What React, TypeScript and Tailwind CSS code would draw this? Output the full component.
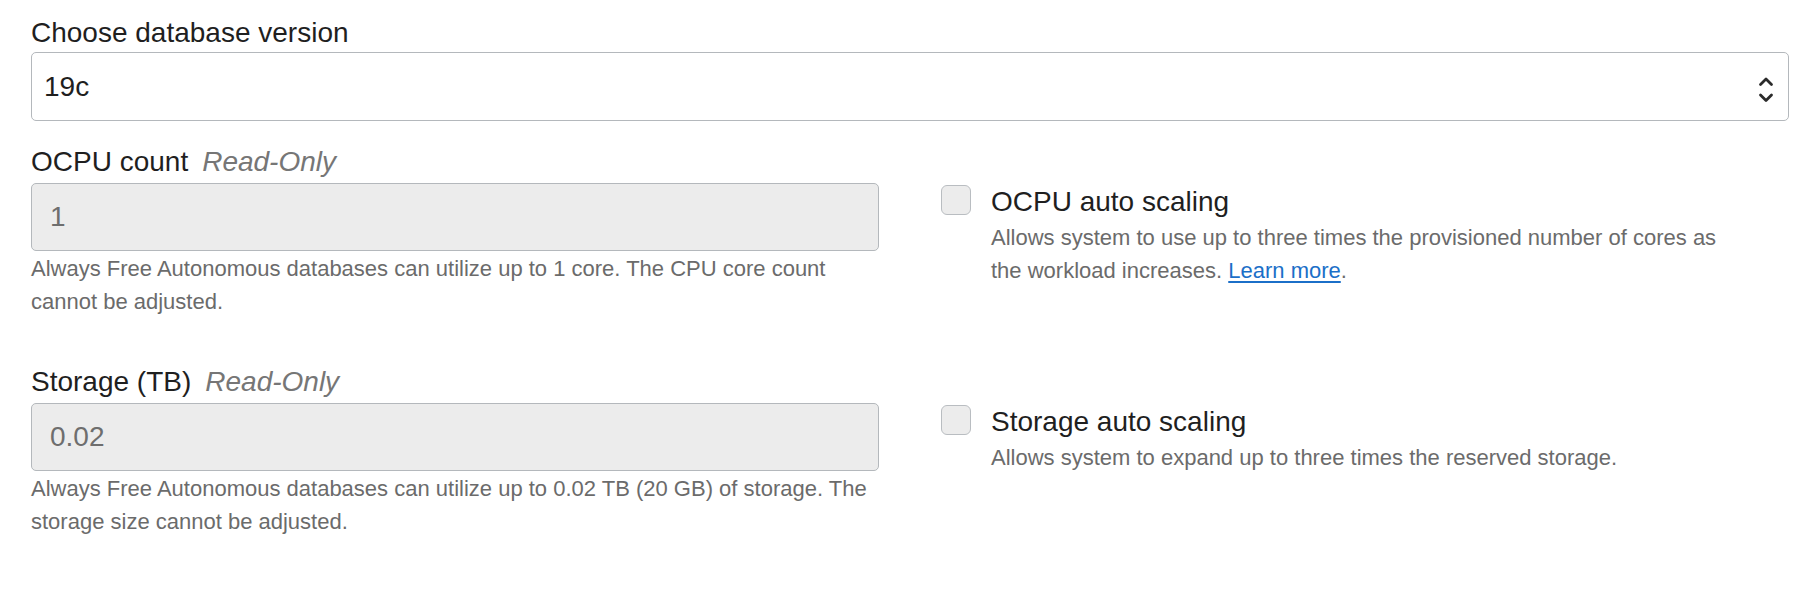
import type { ReactNode } from 'react'

interface ReadOnlyFieldProps {
  label: string
  value: string
  help: string
}

function ReadOnlyField({ label, value, help }: ReadOnlyFieldProps) {
  return (
    <div>
      <div className="text-[28px] leading-[36px] text-[#1f1f1f]">
        {label}
        <span className="ml-[14px] italic text-[#767676]">Read-Only</span>
      </div>
      <div className="mt-[3px] flex h-[68px] items-center rounded-[5px] border border-[#b4b8bc] bg-[#ececec] pl-[18px] text-[28px] text-[#6e6e6e]">
        {value}
      </div>
      <p className="mt-[1px] text-[22px] leading-[33px] text-[#6b6b6b]">{help}</p>
    </div>
  )
}

interface AutoScaleOptionProps {
  title: string
  children: ReactNode
}

function AutoScaleOption({ title, children }: AutoScaleOptionProps) {
  return (
    <label className="flex items-start gap-[20px] pt-[39px] cursor-pointer">
      <span className="mt-[2px] h-[30px] w-[30px] shrink-0 rounded-[6px] border border-[#b9bdc1] bg-[#ececec]" />
      <span className="block">
        <span className="block pt-[1px] text-[28px] leading-[36px] text-[#1f1f1f]">{title}</span>
        <span className="mt-[1px] block max-w-[760px] text-[22px] leading-[33px] text-[#6b6b6b]">
          {children}
        </span>
      </span>
    </label>
  )
}

export default function App() {
  return (
    <div className="min-h-screen bg-white px-[31px] pt-[15px] font-['Liberation_Sans',Arial,sans-serif]">
      <label className="block text-[28px] leading-[36px] text-[#1f1f1f]">Choose database version</label>
      <div className="mt-[1px] flex h-[69px] items-center justify-between rounded-[5px] border border-[#b4b8bc] bg-white pl-[12px] pr-[14px] text-[28px] text-[#1f1f1f]">
        <span>19c</span>
        <svg
          width="16"
          height="28"
          viewBox="0 0 16 28"
          fill="none"
          stroke="#2b2b2b"
          strokeWidth="2.8"
          strokeLinecap="round"
          strokeLinejoin="round"
          className="mt-[6px]"
        >
          <path d="M2.5 8.5 L8 3 L13.5 8.5" />
          <path d="M2.5 19 L8 24.5 L13.5 19" />
        </svg>
      </div>

      <div className="mt-[23px] grid grid-cols-2 gap-x-[62px]">
        <ReadOnlyField
          label="OCPU count"
          value="1"
          help="Always Free Autonomous databases can utilize up to 1 core. The CPU core count cannot be adjusted."
        />
        <AutoScaleOption title="OCPU auto scaling">
          Allows system to use up to three times the provisioned number of cores as the workload increases.{' '}
          <a href="#" className="text-[#1b6fc8] underline underline-offset-[3px]">Learn more</a>.
        </AutoScaleOption>
      </div>

      <div className="mt-[46px] grid grid-cols-2 gap-x-[62px]">
        <ReadOnlyField
          label="Storage (TB)"
          value="0.02"
          help="Always Free Autonomous databases can utilize up to 0.02 TB (20 GB) of storage. The storage size cannot be adjusted."
        />
        <AutoScaleOption title="Storage auto scaling">
          Allows system to expand up to three times the reserved storage.
        </AutoScaleOption>
      </div>
    </div>
  )
}
